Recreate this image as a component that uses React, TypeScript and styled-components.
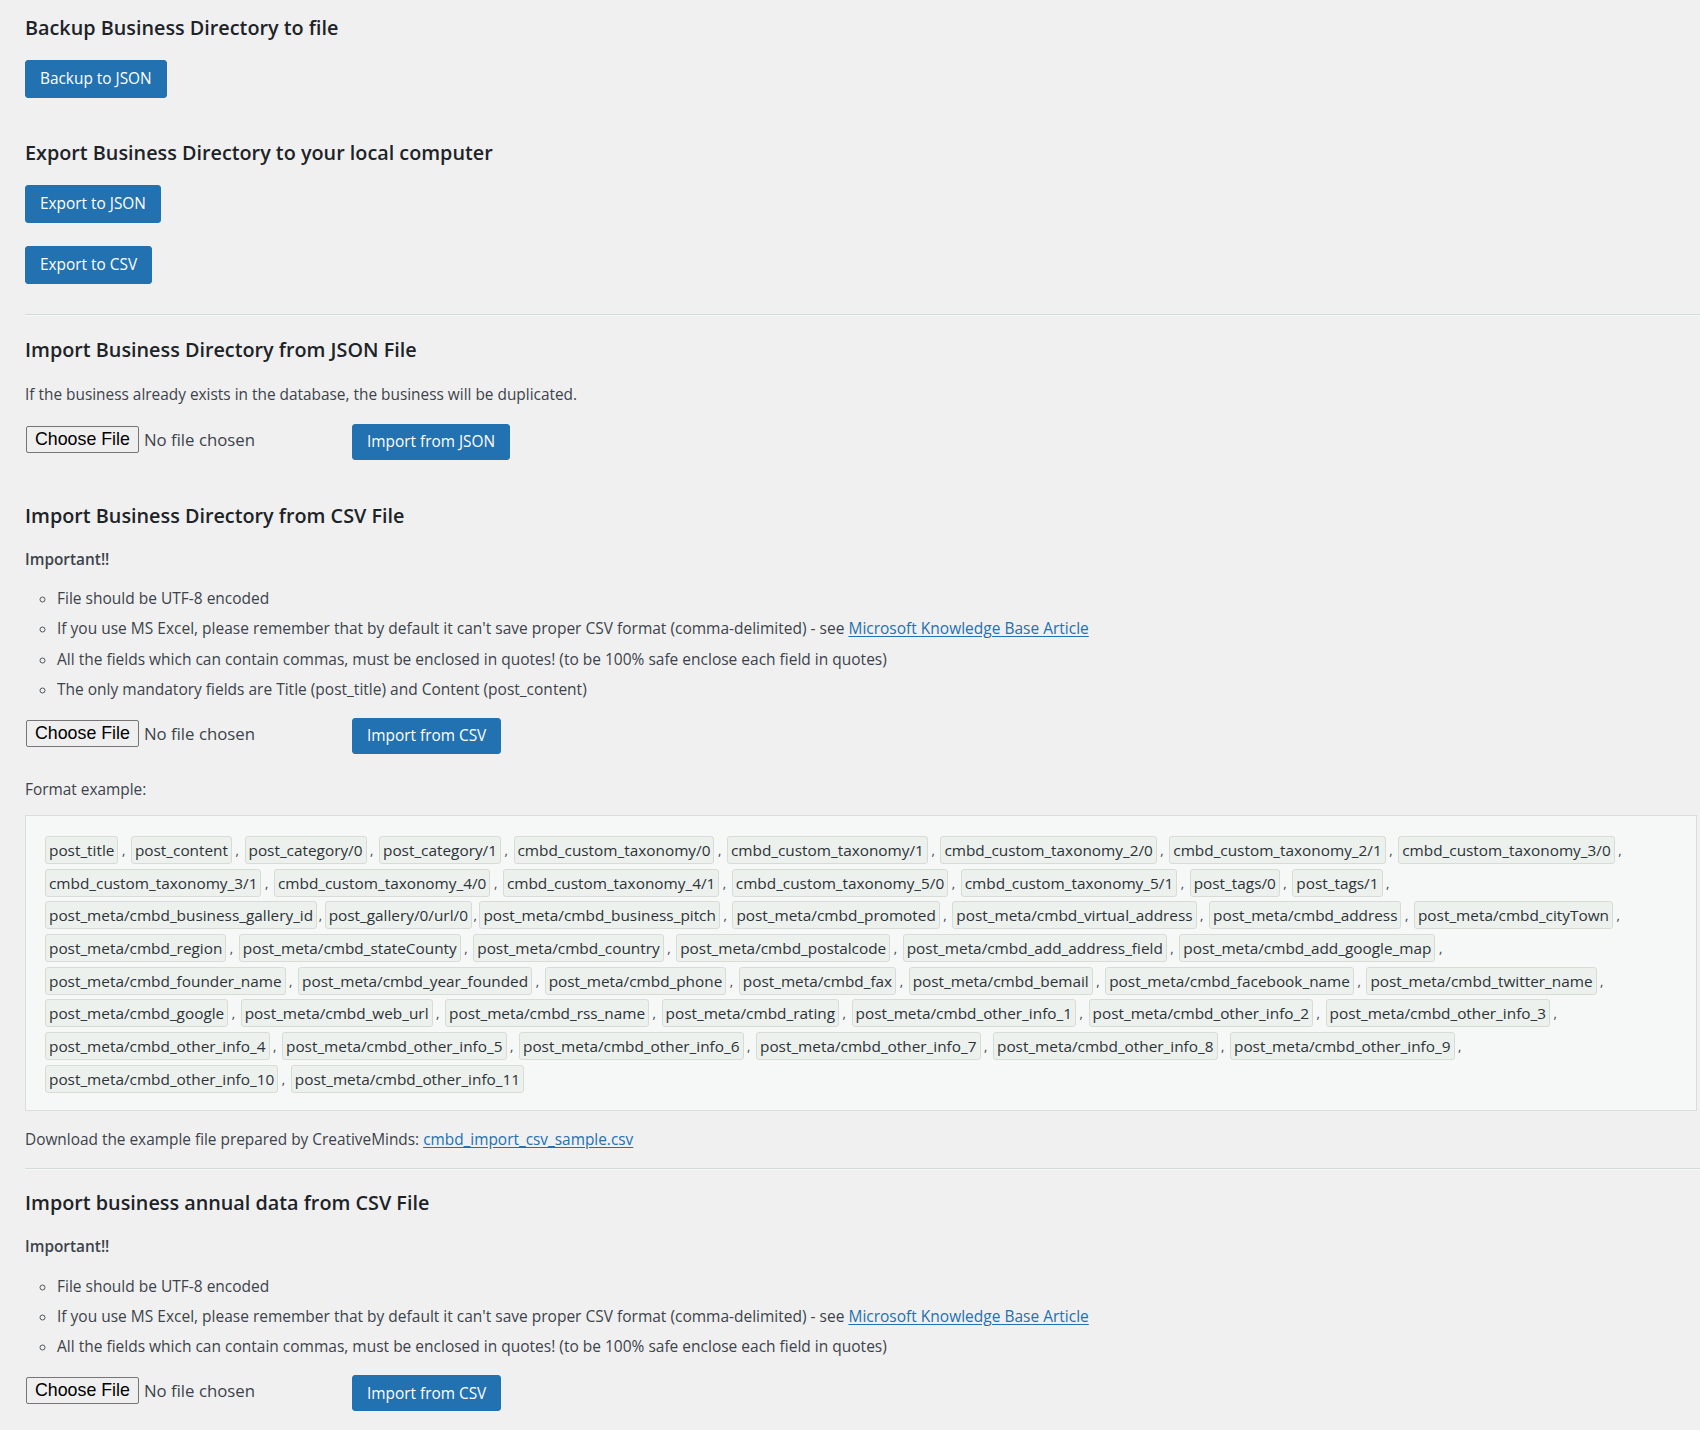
import React from "react";
import styled, { createGlobalStyle } from "styled-components";

const GlobalStyle = createGlobalStyle`
  html, body { margin: 0; padding: 0; background: #f0f0f1; }
  body {
    font-family: "Open Sans", "Noto Sans", sans-serif;
    color: #3c434a;
    -webkit-font-smoothing: antialiased;
  }
`;

const Page = styled.main`
  display: flex;
  flex-direction: column;
  align-items: flex-start;
  padding: 0 0 24px 25px;
  min-height: 1430px;
  box-sizing: border-box;
`;

const Heading = styled.h2<{ $mt: number }>`
  margin: ${(p) => p.$mt}px 0 0;
  font-size: 19.8px;
  font-weight: 600;
  line-height: 26px;
  color: #1d2327;
`;

const PrimaryButton = styled.button<{ $mt: number; $h?: number }>`
  display: inline-flex;
  align-items: center;
  box-sizing: border-box;
  height: ${(p) => p.$h ?? 38}px;
  margin-top: ${(p) => p.$mt}px;
  padding: 0 14px;
  background: #2271b1;
  border: 1px solid #2271b1;
  border-radius: 3px;
  color: #ffffff;
  font-family: inherit;
  font-size: 15.4px;
  line-height: 1;
  cursor: pointer;
`;

const Divider = styled.hr<{ $mt: number }>`
  align-self: stretch;
  margin: ${(p) => p.$mt}px 0 0;
  border: 0;
  border-top: 1px solid #d3dbd8;
  border-bottom: 1px solid #f7f8f8;
  height: 0;
`;

const Text = styled.p<{ $mt: number; $strong?: boolean }>`
  margin: ${(p) => p.$mt}px 0 0;
  font-size: 15.4px;
  line-height: 22px;
  font-weight: ${(p) => (p.$strong ? 600 : 400)};
  color: #3c434a;
`;

const Link = styled.a`
  color: #2271b1;
  text-decoration: underline;
  text-underline-offset: 2px;
`;

const Notes = styled.ul<{ $mt: number }>`
  display: flex;
  flex-direction: column;
  gap: 8.3px;
  margin: ${(p) => p.$mt}px 0 0;
  padding: 0 0 0 32px;
  list-style: circle;
`;

const Note = styled.li`
  font-size: 15.5px;
  line-height: 22px;
  color: #3c434a;
  &::marker {
    font-size: 15px;
    color: #50575e;
  }
`;

const FileRow = styled.div<{ $mt: number }>`
  display: flex;
  align-items: flex-start;
  margin-top: ${(p) => p.$mt}px;
`;

const FilePicker = styled.label`
  display: flex;
  align-items: center;
  gap: 5px;
  width: 327px;
  margin-top: 2px;
`;

const ChooseButton = styled.span`
  display: inline-flex;
  align-items: center;
  box-sizing: border-box;
  height: 27px;
  padding: 0 8px;
  margin-left: 1px;
  background: #efefef;
  border: 1px solid #767676;
  border-radius: 2px;
  color: #000;
  font-family: "Liberation Sans", Arial, sans-serif;
  font-size: 17.8px;
`;

const NoFile = styled.span`
  font-size: 16.8px;
  color: #3c434a;
`;

const ExampleBox = styled.div`
  align-self: stretch;
  display: flex;
  flex-direction: column;
  gap: 4.7px;
  margin: 14px 3px 0 0;
  padding: 20px 19px 17px 19px;
  background: #f6f7f7;
  border: 1px solid #dcdcde;
`;

const TagRow = styled.div`
  display: flex;
  align-items: center;
  height: 28px;
`;

const Tag = styled.code`
  box-sizing: border-box;
  height: 28px;
  padding: 0 3px;
  background: #edf1ed;
  border: 1px solid #d7dcd5;
  border-radius: 3px;
  font-family: "Open Sans", "Noto Sans", sans-serif;
  font-size: 15.35px;
  line-height: 26px;
  color: #2c3338;
  white-space: nowrap;
`;

const Comma = styled.span<{ $tight?: boolean }>`
  display: inline-block;
  width: ${(p) => (p.$tight ? 7.5 : 12.5)}px;
  padding-left: ${(p) => (p.$tight ? 1.5 : 3.5)}px;
  box-sizing: border-box;
  font-size: 13px;
  line-height: 28px;
  color: #3c434a;
`;

type Field = { name: string; tight?: boolean };

const f = (name: string, tight?: boolean): Field => ({ name, tight });

const rows: Field[][] = [
  [
    f("post_title"),
    f("post_content"),
    f("post_category/0"),
    f("post_category/1"),
    f("cmbd_custom_taxonomy/0"),
    f("cmbd_custom_taxonomy/1"),
    f("cmbd_custom_taxonomy_2/0"),
    f("cmbd_custom_taxonomy_2/1"),
    f("cmbd_custom_taxonomy_3/0"),
  ],
  [
    f("cmbd_custom_taxonomy_3/1"),
    f("cmbd_custom_taxonomy_4/0"),
    f("cmbd_custom_taxonomy_4/1"),
    f("cmbd_custom_taxonomy_5/0"),
    f("cmbd_custom_taxonomy_5/1"),
    f("post_tags/0"),
    f("post_tags/1"),
  ],
  [
    f("post_meta/cmbd_business_gallery_id", true),
    f("post_gallery/0/url/0", true),
    f("post_meta/cmbd_business_pitch"),
    f("post_meta/cmbd_promoted"),
    f("post_meta/cmbd_virtual_address"),
    f("post_meta/cmbd_address"),
    f("post_meta/cmbd_cityTown"),
  ],
  [
    f("post_meta/cmbd_region"),
    f("post_meta/cmbd_stateCounty"),
    f("post_meta/cmbd_country"),
    f("post_meta/cmbd_postalcode"),
    f("post_meta/cmbd_add_address_field"),
    f("post_meta/cmbd_add_google_map"),
  ],
  [
    f("post_meta/cmbd_founder_name"),
    f("post_meta/cmbd_year_founded"),
    f("post_meta/cmbd_phone"),
    f("post_meta/cmbd_fax"),
    f("post_meta/cmbd_bemail"),
    f("post_meta/cmbd_facebook_name"),
    f("post_meta/cmbd_twitter_name"),
  ],
  [
    f("post_meta/cmbd_google"),
    f("post_meta/cmbd_web_url"),
    f("post_meta/cmbd_rss_name"),
    f("post_meta/cmbd_rating"),
    f("post_meta/cmbd_other_info_1"),
    f("post_meta/cmbd_other_info_2"),
    f("post_meta/cmbd_other_info_3"),
  ],
  [
    f("post_meta/cmbd_other_info_4"),
    f("post_meta/cmbd_other_info_5"),
    f("post_meta/cmbd_other_info_6"),
    f("post_meta/cmbd_other_info_7"),
    f("post_meta/cmbd_other_info_8"),
    f("post_meta/cmbd_other_info_9"),
  ],
  [f("post_meta/cmbd_other_info_10"), f("post_meta/cmbd_other_info_11")],
];

const FileField: React.FC<{ mt: number; action: string }> = ({ mt, action }) => (
  <FileRow $mt={mt}>
    <FilePicker>
      <ChooseButton>Choose File</ChooseButton>
      <NoFile>No file chosen</NoFile>
    </FilePicker>
    <PrimaryButton $mt={0} $h={36}>
      {action}
    </PrimaryButton>
  </FileRow>
);

const kbLink = <Link href="#">Microsoft Knowledge Base Article</Link>;

export default function App() {
  const lastRow = rows.length - 1;
  return (
    <>
      <GlobalStyle />
      <Page>
        <Heading $mt={15}>Backup Business Directory to file</Heading>
        <PrimaryButton $mt={19}>Backup to JSON</PrimaryButton>

        <Heading $mt={42}>Export Business Directory to your local computer</Heading>
        <PrimaryButton $mt={19}>Export to JSON</PrimaryButton>
        <PrimaryButton $mt={23}>Export to CSV</PrimaryButton>

        <Divider $mt={30} />

        <Heading $mt={21}>Import Business Directory from JSON File</Heading>
        <Text $mt={21}>
          If the business already exists in the database, the business will be duplicated.
        </Text>
        <FileField mt={18} action="Import from JSON" />

        <Heading $mt={43}>Import Business Directory from CSV File</Heading>
        <Text $mt={20} $strong>
          Important!!
        </Text>
        <Notes $mt={16}>
          <Note>File should be UTF-8 encoded</Note>
          <Note>
            If you use MS Excel, please remember that by default it can't save proper CSV format
            (comma-delimited) - see {kbLink}
          </Note>
          <Note>
            All the fields which can contain commas, must be enclosed in quotes! (to be 100% safe
            enclose each field in quotes)
          </Note>
          <Note>The only mandatory fields are Title (post_title) and Content (post_content)</Note>
        </Notes>
        <FileField mt={18} action="Import from CSV" />

        <Text $mt={25}>Format example:</Text>
        <ExampleBox>
          {rows.map((row, ri) => (
            <TagRow key={ri}>
              {row.map((field, fi) => {
                const isLast = ri === lastRow && fi === row.length - 1;
                return (
                  <React.Fragment key={field.name}>
                    <Tag>{field.name}</Tag>
                    {!isLast && <Comma $tight={field.tight}>,</Comma>}
                  </React.Fragment>
                );
              })}
            </TagRow>
          ))}
        </ExampleBox>

        <Text $mt={18}>
          Download the example file prepared by CreativeMinds:{" "}
          <Link href="#">cmbd_import_csv_sample.csv</Link>
        </Text>

        <Divider $mt={17} />

        <Heading $mt={20}>Import business annual data from CSV File</Heading>
        <Text $mt={20} $strong>
          Important!!
        </Text>
        <Notes $mt={17}>
          <Note>File should be UTF-8 encoded</Note>
          <Note>
            If you use MS Excel, please remember that by default it can't save proper CSV format
            (comma-delimited) - see {kbLink}
          </Note>
          <Note>
            All the fields which can contain commas, must be enclosed in quotes! (to be 100% safe
            enclose each field in quotes)
          </Note>
        </Notes>
        <FileField mt={18} action="Import from CSV" />
      </Page>
    </>
  );
}
